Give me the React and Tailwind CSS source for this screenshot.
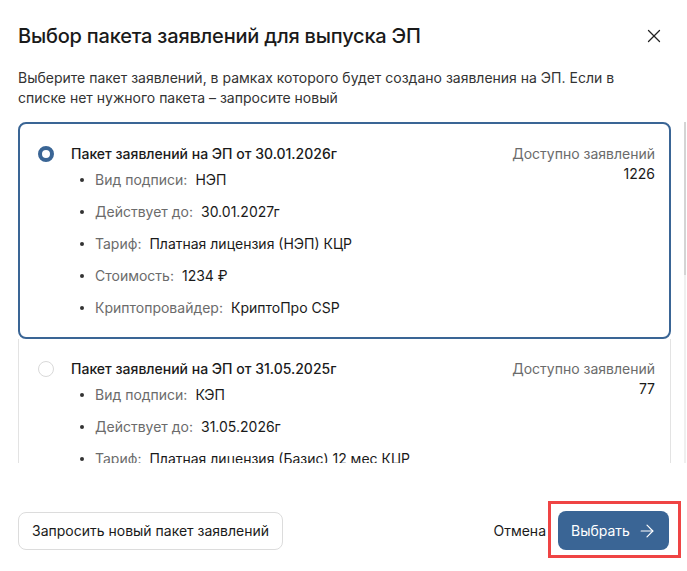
import { X, ArrowRight } from 'lucide-react'

// ── Packages data ────────────────────────────────────────────────────────────
const PACKAGES = [
  {
    id: 1,
    title: 'Пакет заявлений на ЭП от 30.01.2026г',
    available: '1226',
    items: [
      ['Вид подписи:', 'НЭП'],
      ['Действует до:', '30.01.2027г'],
      ['Тариф:', 'Платная лицензия (НЭП) КЦР'],
      ['Стоимость:', '1234 ₽'],
      ['Криптопровайдер:', 'КриптоПро CSP'],
    ],
  },
  {
    id: 2,
    title: 'Пакет заявлений на ЭП от 31.05.2025г',
    available: '77',
    items: [
      ['Вид подписи:', 'КЭП'],
      ['Действует до:', '31.05.2026г'],
      ['Тариф:', 'Платная лицензия (Базис) 12 мес КЦР'],
      ['Стоимость:', '990 ₽'],
      ['Криптопровайдер:', 'КриптоПро CSP'],
    ],
  },
]

function PackageCard({ pkg, selected }) {
  return (
    <div
      className={`flex justify-between shrink-0 ${
        selected
          ? 'border-2 border-[#3a6595] rounded-[8px] pl-[18px] pr-[14px] pt-[20px] pb-[19px]'
          : 'border border-[#e3e3e3] border-t-0 rounded-b-[8px] pl-[19px] pr-[15px] pt-[20px] pb-[20px]'
      }`}
    >
      <div className="flex items-start">
        {selected ? (
          <div className="mt-[2px] w-[16px] h-[16px] rounded-full border-[4px] border-[#3a6595] bg-white shrink-0" />
        ) : (
          <div className="mt-[2px] w-[16px] h-[16px] rounded-full border border-[#d9d9d9] bg-white shrink-0" />
        )}
        <div className="ml-[17px]">
          <div className="text-[14px] leading-[20px] font-medium text-[#1a1a1a]">{pkg.title}</div>
          <ul className="mt-[6px] flex flex-col gap-[12px]">
            {pkg.items.map(([label, value]) => (
              <li key={label} className="flex items-center text-[14px] leading-[20px] pl-[9px]">
                <span className="w-[4px] h-[4px] rounded-full bg-[#333] mr-[11px] shrink-0" />
                <span className="text-[#6b6b6b]">{label}</span>
                <span className="ml-[8px] text-[#1a1a1a]">{value}</span>
              </li>
            ))}
          </ul>
        </div>
      </div>
      <div className="text-right text-[14px] leading-[20px]">
        <div className="text-[#6b6b6b]">Доступно заявлений</div>
        <div className="text-[#1a1a1a]">{pkg.available}</div>
      </div>
    </div>
  )
}

export default function App() {
  return (
    <div
      className="relative w-[687px] h-[571px] bg-white overflow-hidden"
      style={{ fontFamily: 'Inter, "Noto Sans", sans-serif' }}
    >
      {/* Header */}
      <div className="flex items-center justify-between pl-[18px] pr-[22px] pt-[22px]">
        <h2 className="text-[20px] leading-[28px] font-medium tracking-[-0.2px] text-[#1a1a1a]">
          Выбор пакета заявлений для выпуска ЭП
        </h2>
        <X size={22} strokeWidth={1.4} className="text-[#222]" />
      </div>

      <p className="mt-[18px] px-[18px] text-[14px] leading-[20px] text-[#333]">
        Выберите пакет заявлений, в рамках которого будет создано заявления на ЭП. Если в
        <br />
        списке нет нужного пакета – запросите новый
      </p>

      {/* Scrollable list */}
      <div className="mt-[14px] flex">
        <div className="ml-[18px] w-[653px] h-[341px] overflow-hidden flex flex-col">
          {PACKAGES.map((pkg, i) => (
            <PackageCard key={pkg.id} pkg={pkg} selected={i === 0} />
          ))}
        </div>
        <div className="ml-[13px] w-[2px] h-[341px] bg-[#efefef] flex flex-col">
          <div className="h-[153px] bg-[#d4d4d4]" />
        </div>
      </div>

      {/* Footer */}
      <div className="mt-[48px] flex items-center justify-between pl-[18px] pr-[18px]">
        <button className="h-[38px] px-[13px] rounded-[8px] border border-[#dcdcdc] bg-white text-[14px] text-[#1a1a1a]">
          Запросить новый пакет заявлений
        </button>
        <div className="flex items-center">
          <span className="text-[14px] text-[#1a1a1a] mr-[12px]">Отмена</span>
          <button className="h-[39px] w-[111px] pl-[13px] pr-[12px] rounded-[8px] bg-[#3a6595] text-white text-[14px] flex items-center justify-between">
            Выбрать
            <ArrowRight size={20} strokeWidth={1.4} />
          </button>
        </div>
      </div>

      {/* Highlight frame */}
      <div className="absolute left-[548px] top-[501px] w-[133px] h-[57px] border-[3px] border-[#ef4444]" />
    </div>
  )
}
